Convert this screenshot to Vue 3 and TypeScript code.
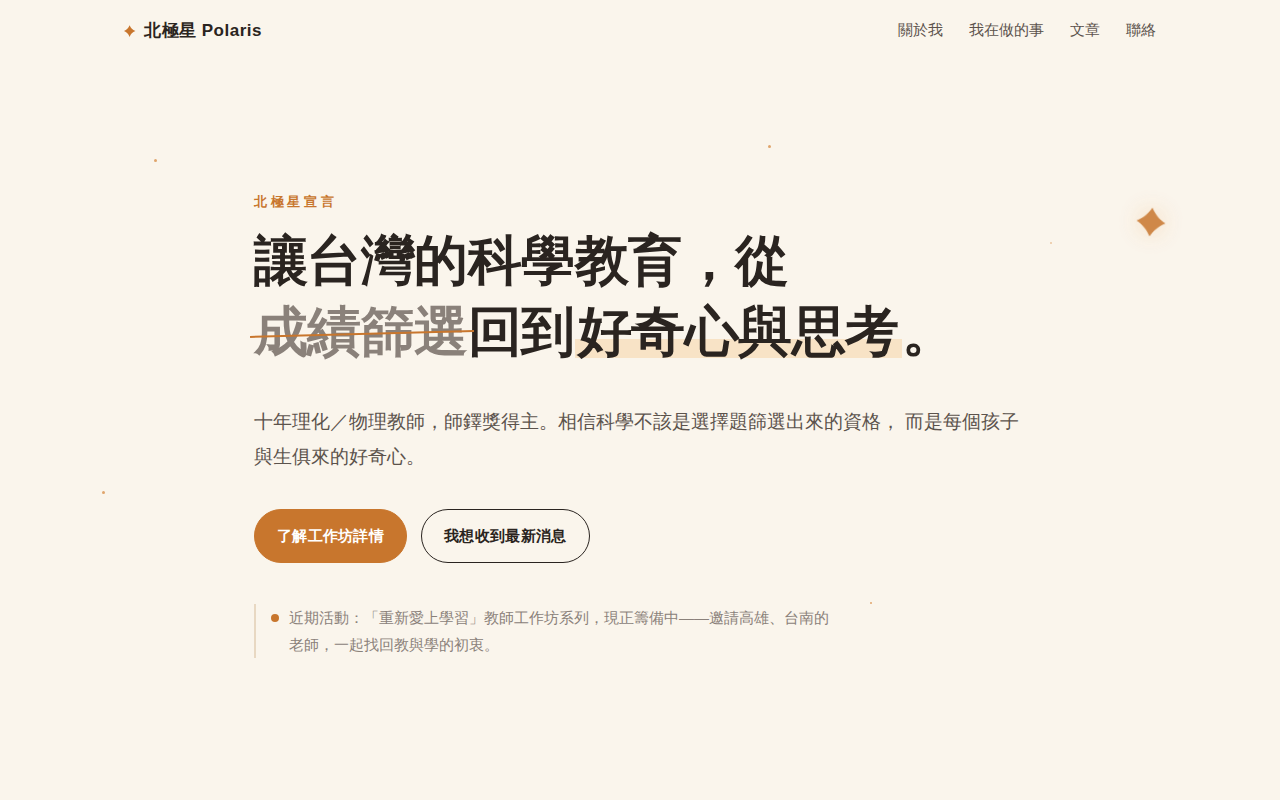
<script setup lang="ts">
interface NavLink {
  label: string
  href: string
}

const links: NavLink[] = [
  { label: '關於我', href: '#about' },
  { label: '我在做的事', href: '#work' },
  { label: '文章', href: '#posts' },
  { label: '聯絡', href: '#contact' },
]

const specks: string[] = ['a', 'b', 'c', 'd', 'e']
</script>

<template>
  <div class="page" lang="zh-Hant">
    <div class="sky" aria-hidden="true">
      <span v-for="s in specks" :key="s" class="speck" :class="`speck-${s}`"></span>
      <svg class="polaris" viewBox="-16 -16 32 32">
        <path d="M0-14.6C3.5-8 8-3.5 14.6 0C8 3.5 3.5 8 0 14.6C-3.5 8-8 3.5-14.6 0C-8-3.5-3.5-8 0-14.6Z" />
      </svg>
    </div>

    <header class="bar">
      <a class="brand" href="#top">
        <svg class="mark" viewBox="-6 -6 12 12" aria-hidden="true">
          <path d="M-.4-5.8C.9-2.7 2.4-1.2 5.4 .1C2.4 1.4 .9 2.9 -.4 6C-1.7 2.9-3.2 1.4-6 .1C-3.2-1.2-1.7-2.7-.4-5.8Z" />
        </svg>
        <span>北極星 Polaris</span>
      </a>
      <nav class="links">
        <a v-for="l in links" :key="l.href" :href="l.href">{{ l.label }}</a>
      </nav>
    </header>

    <main class="hero">
      <p class="eyebrow">北極星宣言</p>
      <h1>
        讓台灣的科學教育，從<br /><span class="struck">成績篩選</span>回到<span class="lit">好奇心與思考</span>。
      </h1>
      <p class="lead">
        十年理化／物理教師，師鐸獎得主。相信科學不該是選擇題篩選出來的資格，
        而是每個孩子與生俱來的好奇心。
      </p>
      <div class="actions">
        <a class="btn solid" href="#workshop">了解工作坊詳情</a>
        <a class="btn outline" href="#subscribe">我想收到最新消息</a>
      </div>
      <div class="note">
        <span class="dot" aria-hidden="true"></span>
        <p>近期活動：「重新愛上學習」教師工作坊系列，現正籌備中——邀請高雄、台南的老師，一起找回教與學的初衷。</p>
      </div>
    </main>
  </div>
</template>

<style>
body {
  margin: 0;
  background: #faf5ec;
}
</style>

<style scoped>
.page {
  position: relative;
  min-height: 100vh;
  overflow: hidden;
  background: #faf5ec;
  color: #2a2420;
  font-family: "Liberation Sans", sans-serif;
  font-size: 15px;
}

p,
h1 {
  margin: 0;
}

a {
  color: inherit;
  text-decoration: none;
}

.sky {
  position: absolute;
  inset: 0;
  pointer-events: none;
}

.speck {
  position: absolute;
  width: 3px;
  height: 3px;
  border-radius: 50%;
  background: #e0a56c;
}

.speck-a { left: 12%; top: 159px; }
.speck-b { left: 60%; top: 145px; }
.speck-c { left: 82%; top: 242px; width: 2px; height: 2px; opacity: 0.6; }
.speck-d { left: 8%; top: 491px; }
.speck-e { left: 68%; top: 602px; width: 2px; height: 2px; }

.polaris {
  position: absolute;
  top: 206px;
  right: 113px;
  width: 32px;
  height: 32px;
  fill: #c8762d;
  opacity: 0.85;
  transform: rotate(6deg);
  filter: drop-shadow(0 0 12px rgba(235, 160, 80, 0.45));
}

.bar {
  position: relative;
  box-sizing: border-box;
  max-width: 1080px;
  margin: 0 auto;
  padding: 16px 24px;
  display: flex;
  align-items: flex-start;
  justify-content: space-between;
}

.brand {
  display: flex;
  align-items: center;
  gap: 8px;
  font-size: 17px;
  font-weight: 700;
  line-height: 30px;
  letter-spacing: 0.03em;
}

.mark {
  width: 12px;
  height: 12px;
  fill: #c8762d;
}

.links {
  display: flex;
  gap: 26px;
  color: #5c534c;
  line-height: 28px;
}

.hero {
  position: relative;
  box-sizing: border-box;
  max-width: 820px;
  margin: 0 auto;
  padding: 128px 24px 80px;
}

.eyebrow {
  color: #c8762d;
  font-size: 13px;
  font-weight: 700;
  line-height: 24px;
  letter-spacing: 0.28em;
}

h1 {
  margin-top: 11px;
  font-size: 54px;
  font-weight: 700;
  line-height: 71px;
  letter-spacing: -0.01em;
}

.struck {
  position: relative;
  color: #8a817a;
}

.struck::after {
  content: "";
  position: absolute;
  left: -4px;
  right: -6px;
  top: 54%;
  height: 2px;
  background: #c8762d;
  transform: rotate(-1.5deg);
}

.lit {
  padding: 0 3px;
  background: linear-gradient(transparent 64%, #f8e3c6 64%, #f8e3c6 95%, transparent 95%);
}

.lead {
  margin-top: 37px;
  color: #5c534c;
  font-size: 19px;
  line-height: 35px;
}

.actions {
  display: flex;
  flex-wrap: wrap;
  gap: 14px;
  margin-top: 35px;
}

.btn {
  padding: 13px 22px;
  border: 1px solid #2a2420;
  border-radius: 27px;
  font-weight: 700;
  line-height: 26px;
  letter-spacing: 0.02em;
}

.solid {
  border-color: #c8762d;
  background: #c8762d;
  color: #fff;
}

.note {
  display: flex;
  gap: 10px;
  max-width: 562px;
  margin-top: 41px;
  padding-left: 15px;
  border-left: 2px solid #e8d8c2;
  color: #8a817a;
  line-height: 27px;
}

.dot {
  flex: none;
  width: 8px;
  height: 8px;
  margin-top: 10px;
  border-radius: 50%;
  background: #c8762d;
}
</style>
